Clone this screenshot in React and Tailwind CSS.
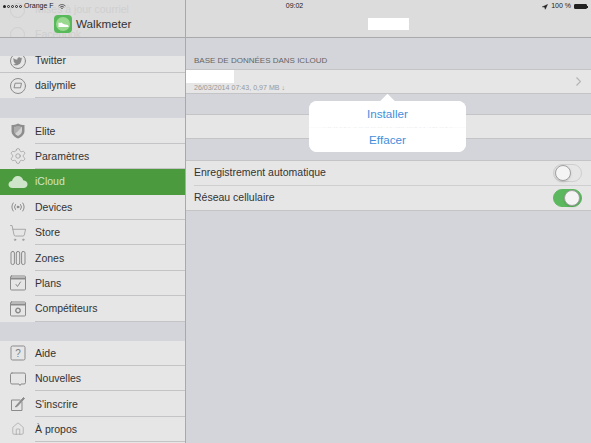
import { Settings, ShoppingCart, House, Navigation } from 'lucide-react';

const font = { fontFamily: '"Liberation Sans", Arial, sans-serif' };

function Outline({ children }) {
  return (
    <svg width="20" height="20" viewBox="0 0 20 20" fill="none" stroke="#8b8b8b" strokeWidth="1" strokeLinecap="round" strokeLinejoin="round">
      {children}
    </svg>
  );
}

const TwitterIcon = () => (
  <Outline>
    <circle cx="10" cy="10" r="7.5" />
    <path d="M14.2 7.2c-.4.2-.7.3-1.1.3.4-.2.7-.6.8-1-.4.2-.8.4-1.2.4a2 2 0 0 0-3.4 1.8C7.7 8.6 6.4 7.9 5.6 6.9c-.5.9-.2 2 .6 2.6-.3 0-.6-.1-.9-.2 0 .9.7 1.8 1.6 2-.3.1-.6.1-.9 0 .3.8 1 1.3 1.9 1.4-.8.6-1.8.9-2.9.8 3.8 2.3 8.7-.2 8.4-4.9.3-.2.6-.5.8-.8z" fill="#8b8b8b" stroke="none" />
  </Outline>
);

const DailymileIcon = () => (
  <Outline>
    <circle cx="10" cy="10" r="7.5" />
    <path d="M7.5 7.2h6l-1 4.6H6.4z" />
  </Outline>
);

const ShieldIcon = () => (
  <svg width="20" height="20" viewBox="0 0 20 20">
    <path d="M10 2.5c2 1 4.500 1.500 6.500 1.500v6c0 3.500-3 6-6.500 7.500C6.500 16 3.500 13.500 3.500 10V4c2 0 4.500-.5 6.500-1.500z" fill="#8d8d8d" />
    <path d="M10 5c1.300.6 2.800.9 4 1v4c0 2.300-1.800 4-4 5-2.200-1-4-2.700-4-5V6c1.200-.1 2.700-.4 4-1z" fill="#d3d3d3" />
    <path d="M13.500 6.500L6.500 13.500 6 10V6.200L10 5z" fill="#8d8d8d" opacity="0.55" />
  </svg>
);

const DevicesIcon = () => (
  <Outline>
    <circle cx="10" cy="10" r="0.9" fill="#8b8b8b" />
    <path d="M7.400 7.500a4 4 0 0 0 0 5M12.600 7.500a4 4 0 0 1 0 5M5.200 6a7 7 0 0 0 0 8M14.800 6a7 7 0 0 1 0 8" />
  </Outline>
);

const ZonesIcon = () => (
  <Outline>
    <rect x="3" y="3.500" width="3.400" height="13" rx="1.500" />
    <rect x="8.300" y="3.500" width="3.400" height="13" rx="1.500" />
    <rect x="13.600" y="3.500" width="3.400" height="13" rx="1.500" />
  </Outline>
);

const PlansIcon = () => (
  <Outline>
    <rect x="2.500" y="3" width="15" height="14" rx="1" />
    <path d="M3 5.500h14" strokeWidth="2" />
    <path d="M8 11.500l1.500 2 3-4.500" />
  </Outline>
);

const CompetitorsIcon = () => (
  <Outline>
    <rect x="2.500" y="3" width="15" height="14" rx="1" />
    <path d="M3 5.500h14" strokeWidth="2" />
    <circle cx="10" cy="11.500" r="2.200" strokeDasharray="1 0.800" strokeWidth="1.500" />
  </Outline>
);

const HelpIcon = () => (
  <svg width="20" height="20" viewBox="0 0 20 20" fill="none" stroke="#8b8b8b">
    <rect x="3" y="3" width="14" height="14" rx="1.500" />
    <text x="10" y="14" textAnchor="middle" fontSize="10" fill="#7d7d7d" stroke="none" style={font}>?</text>
  </svg>
);

const BubbleIcon = () => (
  <Outline>
    <path d="M4 4h12a1.500 1.500 0 0 1 1.500 1.500v8A1.500 1.500 0 0 1 16 15h-3l-1 1.500L11 15H4a1.500 1.500 0 0 1-1.500-1.500v-8A1.500 1.500 0 0 1 4 4z" />
  </Outline>
);

const SignupIcon = () => (
  <Outline>
    <path d="M14 8v8.500H3.500V6H12" />
    <path d="M7.500 12.500L15.500 3.500l1 1-7.500 8z" fill="#8b8b8b" />
  </Outline>
);

const CloudIcon = () => (
  <svg width="20" height="14" viewBox="0 0 20 14">
    <path d="M4.500 13C2 13 .5 11.400 .5 9.500S2 6.200 4 6C4.700 3 7 1 9.800 1c2.800 0 4.800 1.800 5.400 4.300 2.500.2 4.300 1.800 4.300 4S17.800 13 15.500 13z" fill="#cfe5ca" />
  </svg>
);

function ShoeLogo() {
  return (
    <div className="flex h-[18px] w-[18px] items-center justify-center rounded-[4px] bg-[#58b95a]">
      <div className="flex h-[14px] w-[14px] items-center justify-center rounded-full bg-[#9ad88f]">
        <svg width="11" height="7" viewBox="0 0 11 7">
          <path d="M0.500 1.500c1 .6 2 .6 3 0l1.500 1.200c1.200.6 2.700.8 4 1.100 1 .3 1.500.8 1.500 1.700v.500H.500z" fill="#fff" />
        </svg>
      </div>
    </div>
  );
}

function MenuRow({ icon, label, active }) {
  return (
    <div className={`flex h-[25.4px] shrink-0 items-center ${active ? 'bg-[#4c9a3e]' : 'bg-[#e6e6e6]'}`}>
      <div className="flex w-[35px] shrink-0 justify-center">{icon}</div>
      <div className={`flex h-full flex-1 items-center border-b pt-[2px] text-[10.5px] ${active ? 'border-transparent text-[#cfe5ca]' : 'border-[#c4c4c6] text-[#333]'}`}>
        {label}
      </div>
    </div>
  );
}

function MenuGap({ className }) {
  return <div className={`shrink-0 bg-[#d4d5da] ${className}`} />;
}

function Toggle({ on }) {
  return (
    <div className={`flex h-[18px] w-[29px] items-center rounded-full border p-px ${on ? 'justify-end border-[#5cb85f] bg-[#5cb85f]' : 'justify-start border-[#cfcfcf] bg-[#e6e6e6]'}`}>
      <div className="h-[16px] w-[16px] rounded-full border border-[#a0a0a0] bg-[#f4f4f4] shadow-sm" />
    </div>
  );
}

function Sidebar() {
  return (
    <div className="flex w-[186px] shrink-0 flex-col border-r border-[#a9a9ab] bg-[#e6e6e6]">
      <div className="relative h-[38px] shrink-0 overflow-hidden border-b border-[#a9a9ab] bg-[#dcdcdc]">
        {/* rows scrolled under the translucent bar */}
        <div className="absolute left-[35px] top-[2px] text-[10.5px] text-[#cfcfcf]">Mises à jour courriel</div>
        <div className="absolute left-[35px] top-[27px] text-[10.5px] text-[#cfcfcf]">Facebook</div>
        <div className="absolute left-[10px] top-[27px] h-[15px] w-[15px] rounded-full border border-[#cfcfcf]" />
        <div className="absolute left-[10px] top-[3px] h-[15px] w-[15px] rounded-full border border-[#cfcfcf]" />
        <div className="absolute inset-x-0 top-[15px] flex items-center pl-[54px]">
          <ShoeLogo />
          <span className="ml-[4px] text-[11.7px] leading-[18px] text-[#333]">Walkmeter</span>
        </div>
      </div>
      <MenuGap className="h-[18px]" />
      <div className="flex h-[17px] shrink-0 items-end overflow-hidden border-b border-[#c4c4c6] bg-[#e6e6e6]">
        <div className="flex h-[22px] shrink-0 items-center">
          <div className="flex w-[35px] justify-center"><TwitterIcon /></div>
          <span className="text-[10.5px] text-[#333]">Twitter</span>
        </div>
      </div>
      <MenuRow icon={<DailymileIcon />} label="dailymile" />
      <MenuGap className="h-[20px]" />
      <MenuRow icon={<ShieldIcon />} label="Elite" />
      <MenuRow icon={<Settings size={18} strokeWidth={0.8} color="#8b8b8b" />} label="Paramètres" />
      <MenuRow icon={<CloudIcon />} label="iCloud" active />
      <MenuRow icon={<DevicesIcon />} label="Devices" />
      <MenuRow icon={<ShoppingCart size={18} strokeWidth={0.9} color="#8b8b8b" />} label="Store" />
      <MenuRow icon={<ZonesIcon />} label="Zones" />
      <MenuRow icon={<PlansIcon />} label="Plans" />
      <MenuRow icon={<CompetitorsIcon />} label="Compétiteurs" />
      <MenuGap className="h-[19px]" />
      <MenuRow icon={<HelpIcon />} label="Aide" />
      <MenuRow icon={<BubbleIcon />} label="Nouvelles" />
      <MenuRow icon={<SignupIcon />} label="S'inscrire" />
      <MenuRow icon={<House size={14} strokeWidth={0.9} color="#8b8b8b" />} label="À propos" />
    </div>
  );
}

function Detail() {
  return (
    <div className="relative flex flex-1 flex-col bg-[#d4d5da]">
      <div className="flex h-[38px] shrink-0 items-center justify-center border-b border-[#a9a9ab] bg-[#dcdcdc] pt-[11px]">
        <div className="h-[12px] w-[41px] bg-white" />
      </div>
      <div className="flex h-[31px] shrink-0 items-center px-[8px] pt-[14px] text-[8px] text-[#666]">
        BASE DE DONNÉES DANS ICLOUD
      </div>
      <div className="flex h-[25px] shrink-0 items-center justify-between border-y border-[#c4c4c6] bg-[#e6e6e6] pr-[10px]">
        <div className="flex flex-col">
          <div className="h-[13px] w-[48px] bg-white" />
          <div className="pl-[8px] text-[7.1px] leading-[10px] text-[#999]">26/03/2014 07:43, 0,97 MB ↓</div>
        </div>
        <svg width="5" height="9" viewBox="0 0 5 9" fill="none" stroke="#b4b4b6" strokeWidth="1.2">
          <path d="M.5.5L4.500 4.500 .5 8.500" />
        </svg>
      </div>
      <div className="h-[20px] shrink-0" />
      <div className="flex h-[25px] shrink-0 items-center justify-center border-y border-[#c4c4c6] bg-[#e6e6e6] text-[9px] text-[#8a8a8a]">
        SAUVEGARDER MAINTENANT
      </div>
      <div className="h-[21px] shrink-0" />
      <div className="shrink-0 border-y border-[#c4c4c6] bg-[#e6e6e6]">
        <div className="flex h-[23.5px] items-center justify-between px-[9px] text-[10.5px] text-[#333]">
          <span className="-ml-px">Enregistrement automatique</span>
          <Toggle />
        </div>
        <div className="ml-[8px] border-t border-[#cfcfd1]" />
        <div className="flex h-[24.5px] items-center justify-between px-[9px] text-[10.5px] text-[#333]">
          <span className="-ml-px">Réseau cellulaire</span>
          <Toggle on />
        </div>
      </div>

      {/* popover */}
      <div className="absolute left-[123px] top-[101px] w-[157px]">
        <div className="absolute left-[73px] top-[-5px] h-[11px] w-[11px] rotate-45 bg-white" />
        <div className="relative flex flex-col gap-px overflow-hidden rounded-[8px] bg-white/85 text-[11.7px] text-[#3f8fdc]">
          <div className="flex h-[25.5px] items-center justify-center bg-white">Installer</div>
          <div className="flex h-[24.5px] items-center justify-center bg-white">Effacer</div>
        </div>
      </div>
    </div>
  );
}

function StatusBar() {
  return (
    <div className="absolute inset-x-0 top-0 flex h-[13px] items-center justify-between px-[3px] text-[7px] text-[#222]">
      <div className="flex w-[100px] items-center gap-[1px]">
        <span className="h-[3px] w-[3px] rounded-full bg-[#222]" />
        <span className="h-[3px] w-[3px] rounded-full border-[0.5px] border-[#222]" />
        <span className="h-[3px] w-[3px] rounded-full border-[0.5px] border-[#222]" />
        <span className="h-[3px] w-[3px] rounded-full border-[0.5px] border-[#222]" />
        <span className="h-[3px] w-[3px] rounded-full border-[0.5px] border-[#222]" />
        <span className="ml-[1px]">Orange F</span>
        <svg className="ml-[3px]" width="8" height="6" viewBox="0 0 8 6" fill="none" stroke="#444" strokeWidth="0.8">
          <path d="M.5 2a5 5 0 0 1 7 0M1.800 3.300a3.200 3.200 0 0 1 4.400 0M3 4.500a1.500 1.500 0 0 1 2 0" />
        </svg>
      </div>
      <span className="ml-[-2px] font-medium">09:02</span>
      <div className="flex w-[100px] items-center justify-end gap-[3px]">
        <Navigation size={6} fill="#222" color="#222" />
        <span>100 %</span>
        <div className="flex items-center">
          <div className="h-[5px] w-[13px] rounded-[1px] border-[0.5px] border-[#222] bg-[#222]" />
          <div className="h-[2px] w-px bg-[#222]" />
        </div>
      </div>
    </div>
  );
}

export default function App() {
  return (
    <div className="relative flex h-[443px] w-[591px] overflow-hidden" style={font}>
      <Sidebar />
      <Detail />
      <StatusBar />
    </div>
  );
}
